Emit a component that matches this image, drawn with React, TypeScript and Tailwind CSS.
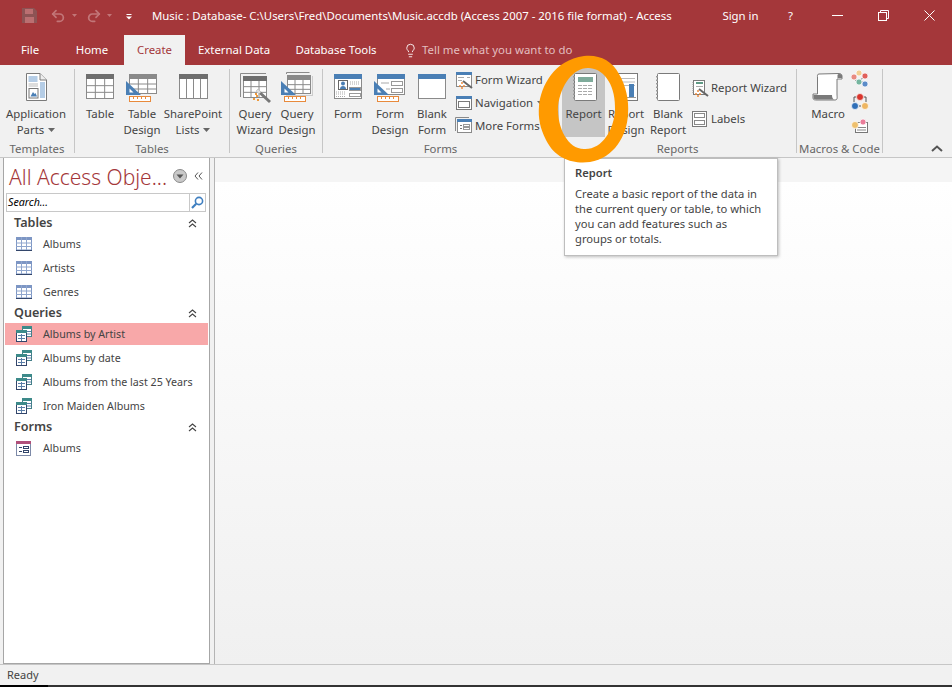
import React from 'react';
import { Lightbulb, Redo2, Undo2 } from 'lucide-react';

const BLUE = '#4a7fb5';
const GREY = '#8a8a8a';

function Big({ children }: { children: React.ReactNode }) {
  return (
    <svg width="32" height="32" viewBox="0 0 32 32" className="shrink-0">
      {children}
    </svg>
  );
}

function Small({ children }: { children: React.ReactNode }) {
  return (
    <svg width="18" height="18" viewBox="0 0 18 18" className="shrink-0">
      {children}
    </svg>
  );
}

// the blue set square and orange ruler shared by the design icons
function DesignTools() {
  return (
    <>
      <path d="M0 9 L15 23 L0 23 Z" fill={BLUE} />
      <path d="M3.5 16.5 L7.5 20.5 L3.5 20.5 Z" fill="#fff" />
      <rect x="3.5" y="24.5" width="21" height="5" fill="#fff" stroke="#e88a3c" />
      <path d="M7.5 25 v2 M11.5 25 v2 M15.5 25 v2 M19.5 25 v2" stroke="#e88a3c" />
    </>
  );
}

function TableGrid({ x, y, w, h, bar = '#6e6e6e' }: { x: number; y: number; w: number; h: number; bar?: string }) {
  const r1 = y + 5 + (h - 5) / 3;
  const r2 = y + 5 + ((h - 5) * 2) / 3;
  const c1 = x + w / 3;
  const c2 = x + (w * 2) / 3;
  return (
    <>
      <rect x={x + 0.5} y={y + 0.5} width={w - 1} height={h - 1} fill="#fff" stroke={GREY} />
      <path d={`M${x} ${r1} H${x + w} M${x} ${r2} H${x + w} M${c1} ${y} V${y + h} M${c2} ${y} V${y + h}`} stroke={GREY} />
      <rect x={x} y={y} width={w} height={5} fill={bar} />
    </>
  );
}

const AppPartsIcon = () => (
  <Big>
    <path d="M6.5 1.5 H20 L26.5 8 V28.5 H6.5 Z" fill="#fff" stroke="#7a7a7a" />
    <path d="M20 1.5 V8 H26.5" fill="#eee" stroke="#7a7a7a" />
    <rect x="8.5" y="4" width="9" height="6" fill="#b5cde6" />
    <rect x="20" y="10" width="5" height="16" fill="#b5cde6" />
    <path d="M8.5 12 H18 M8.5 14 H18" stroke="#bbb" />
    <rect x="9" y="16.5" width="9" height="9.5" fill="#fff" stroke="#777" />
    <path d="M10.5 24.5 L13 20 L14.5 22 L15.5 21 L17 24.5 Z" fill={BLUE} />
  </Big>
);
const TableIcon = () => (
  <Big>
    <TableGrid x={2} y={2} w={28} h={25} />
  </Big>
);
const TableDesignIcon = () => (
  <Big>
    <TableGrid x={3} y={2} w={28} h={20} bar="#8a8a8a" />
    <DesignTools />
  </Big>
);
const SharePointIcon = () => (
  <Big>
    <rect x="2.5" y="2.5" width="28" height="24" fill="#fff" stroke={GREY} />
    <path d="M9.5 2 V27 M16.5 2 V27 M23.5 2 V27" stroke={GREY} />
    <rect x="2" y="2" width="29" height="5" fill="#6e6e6e" />
  </Big>
);
const QueryWizardIcon = () => (
  <Big>
    <path d="M1.5 25 V1.5 H27" fill="none" stroke={GREY} />
    <TableGrid x={4} y={4} w={24} h={22} />
    <path d="M18 18 L31 30" stroke="#777" strokeWidth="3" />
    <path d="M18 18 L21 21" stroke="#ddd" strokeWidth="3" />
    <path d="M14 27 h2 M17 24 h2 M16 22 h2 M18 28 h2" stroke="#ee9a3c" strokeWidth="2" />
  </Big>
);
const QueryDesignIcon = () => (
  <Big>
    <path d="M5.5 2 V0.5 H28.5" fill="none" stroke={GREY} />
    <path d="M31.5 24 V4 M5 23.5 H31" fill="none" stroke="#ccc" />
    <TableGrid x={6} y={3} w={24} h={19} bar="#8a8a8a" />
    <DesignTools />
  </Big>
);
const FormIcon = () => (
  <Big>
    <rect x="2.5" y="2.5" width="27" height="24" fill="#fff" stroke={GREY} />
    <rect x="2" y="2" width="28" height="5" fill={BLUE} />
    <rect x="6.5" y="8.5" width="9" height="9" fill="#fff" stroke="#666" />
    <circle cx="11" cy="11.5" r="2" fill={BLUE} />
    <path d="M8 17 C8 13 14 13 14 17 Z" fill={BLUE} />
    <path d="M18 10 H28 M18 12 H28 M4 20 H14 M4 22 H14 M4 24.5 H14" stroke="#aaa" strokeDasharray="1 1" />
    <rect x="17.5" y="15.5" width="11" height="3" fill={BLUE} stroke="#999" />
    <rect x="17.5" y="21.5" width="11" height="3" fill="#fff" stroke="#999" />
  </Big>
);
const FormDesignIcon = () => (
  <Big>
    <rect x="3.5" y="2.5" width="27" height="20" fill="#fff" stroke={GREY} />
    <rect x="3" y="2" width="28" height="5" fill={BLUE} />
    <path d="M7 11 H15 M12 17 H16" stroke="#aaa" />
    <rect x="17.5" y="9.5" width="11" height="4" fill="#fff" stroke="#999" />
    <rect x="17.5" y="16.5" width="11" height="4" fill="#fff" stroke="#999" />
    <DesignTools />
  </Big>
);
const BlankFormIcon = () => (
  <Big>
    <rect x="2.5" y="2.5" width="27" height="24" fill="#fff" stroke={GREY} />
    <rect x="2" y="2" width="28" height="5" fill={BLUE} />
  </Big>
);

function Spiral({ x }: { x: number }) {
  return <path d={`M${x} 4 V27`} stroke="#999" strokeWidth="2" strokeDasharray="1.5 2" />;
}

const ReportIcon = () => (
  <Big>
    <rect x="6.5" y="1.5" width="22" height="27" rx="1" fill="#fff" stroke="#7a7a7a" />
    <Spiral x={6} />
    <rect x="10" y="5" width="15" height="5" fill="#7fab9b" />
    <path d="M10 13.5 H25 M10 16.5 H25 M10 19.5 H25 M10 22.5 H25" stroke="#aaa" strokeDasharray="4 1" />
  </Big>
);
const ReportDesignIcon = () => (
  <Big>
    <rect x="5.5" y="1.5" width="22" height="27" fill="#fff" stroke="#7a7a7a" />
    <path d="M11 6.5 H25 M11 10 H25 M11 13.5 H25" stroke="#bbb" />
    <path d="M0 1 L4 3 L7 0 L8 4 L11 5 L8 8 L6 11 L4 8 L0 7 L3 4 Z" fill="#f3c884" />
    <rect x="9" y="15" width="5" height="10" fill="#f3c884" />
    <rect x="19" y="12" width="5" height="13" fill={BLUE} />
    <path d="M8 25.5 H26" stroke="#999" />
  </Big>
);
const BlankReportIcon = () => (
  <Big>
    <rect x="5.5" y="1.5" width="22" height="27" rx="1" fill="#fff" stroke="#7a7a7a" />
    <Spiral x={5} />
  </Big>
);
const MacroIcon = () => (
  <Big>
    <path d="M7 2 C5 2 5.5 4 5.5 6 V22 H1 V26 C1 28 3 28 5 28 H23 C26 28 25 25 25 22 V7 H30 V4 C30 2 28 1.5 27 1.5 Z" fill="#fff" stroke="#7a7a7a" />
    <path d="M1.5 23 H20 C20 25 20.5 27 22 27.5 H4 C2 27.5 1.5 26 1.5 25 Z" fill="#7a7a7a" />
    <path d="M25.5 6 H30 V3 C29 1.5 25.5 1.5 25.5 3 Z" fill="#7a7a7a" />
  </Big>
);

const WizardMark = () => (
  <>
    <path d="M8 10 L17 17" stroke="#666" strokeWidth="2" />
    <path d="M4 15 h2 M6 12 h2 M8 15 h2 M6 17 h2" stroke="#ee8a3c" strokeWidth="1.6" />
  </>
);
const FormWizardIcon = () => (
  <Small>
    <rect x="1.5" y="1.5" width="15" height="14" fill="#fff" stroke={GREY} />
    <rect x="1" y="1" width="16" height="3" fill={BLUE} />
    <path d="M3 6.5 H9 M12 6.5 H15 M3 9.5 H7" stroke="#aaa" />
    <WizardMark />
  </Small>
);
const NavigationIcon = () => (
  <Small>
    <rect x="1.5" y="2.5" width="15" height="13" fill="#fff" stroke="#7a7a7a" />
    <rect x="1" y="2" width="16" height="3" fill={BLUE} />
    <rect x="3.5" y="7.5" width="11" height="6" fill="#fff" stroke="#7a7a7a" />
  </Small>
);
const MoreFormsIcon = () => (
  <Small>
    <path d="M0.5 14 V0.5 H14" fill="none" stroke={GREY} />
    <rect x="2.5" y="2.5" width="14" height="13" fill="#fff" stroke={GREY} />
    <rect x="2" y="2" width="15" height="3" fill={BLUE} />
    <path d="M5 8.5 H7 M5 11.5 H7" stroke="#777" />
    <rect x="8.5" y="7.5" width="6" height="2" fill="#fff" stroke="#999" />
    <rect x="8.5" y="10.5" width="6" height="2" fill="#fff" stroke="#999" />
  </Small>
);
const ReportWizardIcon = () => (
  <Small>
    <rect x="2.5" y="1.5" width="11" height="14" fill="#fff" stroke="#7a7a7a" />
    <path d="M2 3 V15" stroke="#999" strokeDasharray="1 1" />
    <rect x="5" y="3" width="7" height="2" fill="#5f9a85" />
    <path d="M5 7.5 H12" stroke="#aaa" />
    <WizardMark />
  </Small>
);
const LabelsIcon = () => (
  <Small>
    <rect x="1.5" y="1.5" width="14" height="15" fill="#fff" stroke="#7a7a7a" />
    <rect x="3.5" y="3.5" width="10" height="4" fill="#fff" stroke="#8a8a8a" />
    <rect x="3.5" y="10.5" width="10" height="4" fill="#fff" stroke="#8a8a8a" />
  </Small>
);
const Bead = ({ x, y, c, r = 2.5 }: { x: number; y: number; c: string; r?: number }) => (
  <circle cx={x} cy={y} r={r} fill={c} stroke="#fff" strokeWidth="0.7" />
);
const RunIcon = () => (
  <Small>
    <path d="M3 7 L9 3 M9 3 L14 6 M4 10 L15 13 M8 11 L14 6" stroke="#888" />
    <Bead x={8} y={3} c="#f2cf93" r={3} />
    <Bead x={3} y={7} c="#e88a80" r={3} />
    <Bead x={14} y={6} c="#e0605a" r={3} />
    <Bead x={8} y={12} c="#75b59f" r={3} />
    <Bead x={14} y={14} c="#5b8cc8" r={3} />
  </Small>
);
const ModuleIcon = () => (
  <Small>
    <path d="M3 9 V4 H6 M15 9 V4 H12" fill="none" stroke="#555" />
    <path d="M8 13 h2" stroke="#555" />
    <Bead x={9} y={4} c="#d9352c" r={3.5} />
    <Bead x={4} y={13} c="#2f6fb8" r={3.5} />
    <Bead x={14} y={13} c="#eeb662" r={3.5} />
  </Small>
);
const ClassIcon = () => (
  <Small>
    <rect x="4.5" y="6.5" width="12" height="10" fill="#fff" stroke="#777" />
    <path d="M6 11.5 H15 M6 14 H15" stroke="#888" />
    <Bead x={4} y={9} c="#eec06e" r={3.5} />
    <Bead x={12} y={6} c="#ea7d9a" r={3} />
  </Small>
);

const Caret = ({ className = '' }: { className?: string }) => (
  <svg width="7" height="4" viewBox="0 0 7 4" className={`inline-block ${className}`}>
    <path d="M0 0 H7 L3.5 4 Z" fill="#666" />
  </svg>
);

function RibbonButton({ w, icon, lines, caret, active }: { w: string; icon: React.ReactNode; lines: string[]; caret?: boolean; active?: boolean }) {
  return (
    <div className={`${w} h-[69px] flex flex-col items-center pt-1 ${active ? 'bg-[#c5c5c5]' : ''}`}>
      {icon}
      <div className="mt-0.5 text-center leading-4 whitespace-nowrap">
        {lines.map((line, i) => (
          <div key={line}>
            {line}
            {caret && i === lines.length - 1 && <Caret className="ml-1 mb-0.5" />}
          </div>
        ))}
      </div>
    </div>
  );
}

function SmallButton({ icon, label, caret, h }: { icon: React.ReactNode; label: string; caret?: boolean; h: string }) {
  return (
    <div className={`${h} flex items-center gap-[2px] whitespace-nowrap`}>
      {icon}
      <span>{label}</span>
      {caret && <Caret className="ml-[2px]" />}
    </div>
  );
}

function Group({ w, label, pl, children }: { w: string; label: string; pl: string; children: React.ReactNode }) {
  return (
    <>
      <div className={`${w} flex flex-col pt-[3px]`}>
        <div className={`h-[69px] flex ${pl}`}>{children}</div>
        <div className="mt-1 h-4 leading-4 text-center text-[#666] whitespace-nowrap">{label}</div>
      </div>
      <div className="w-px mt-1 h-[84px] bg-[#c6c6c6]" />
    </>
  );
}

const TabLabel = ({ w, label }: { w: string; label: string }) => (
  <div className={`${w} h-full flex items-center justify-center text-white`}>{label}</div>
);

const TitleSlot = ({ w, children }: { w: string; children: React.ReactNode }) => (
  <div className={`${w} flex items-center justify-center`}>{children}</div>
);

function TitleBar() {
  return (
    <div className="h-[35px] flex items-center pb-1 text-white">
      <svg width="15" height="15" viewBox="0 0 15 15" className="ml-[22px]">
        <path d="M0 0 H12 L15 3 V15 H0 Z" fill="#8d5354" />
        <rect x="3" y="1" width="8" height="5" fill="#bb6f71" />
        <rect x="3" y="9" width="9" height="6" fill="#bb6f71" />
      </svg>
      <Undo2 size={16} strokeWidth={2.6} className="ml-[13px] text-[#c27678]" />
      <svg width="5" height="3" className="ml-[6px]"><path d="M0 0 H5 L2.5 3 Z" fill="#c27678" /></svg>
      <Redo2 size={16} strokeWidth={2.6} className="ml-[9px] text-[#c27678]" />
      <svg width="5" height="3" className="ml-[5px]"><path d="M0 0 H5 L2.5 3 Z" fill="#c27678" /></svg>
      <svg width="6" height="6" viewBox="0 0 6 6" className="ml-[14px] mt-[2px]">
        <path d="M0.5 0.5 H5.5" stroke="#fff" />
        <path d="M0 2.5 H6 L3 5.5 Z" fill="#fff" />
      </svg>
      <div className="ml-[20px] whitespace-nowrap">
        Music : Database- C:\Users\Fred\Documents\Music.accdb (Access 2007 - 2016 file format) - Access
      </div>
      <div className="ml-auto flex items-center">
        <TitleSlot w="w-[53px]">Sign in</TitleSlot>
        <TitleSlot w="w-[47px]">?</TitleSlot>
        <TitleSlot w="w-[46px]">
          <svg width="11" height="1"><rect width="11" height="1" fill="#fff" /></svg>
        </TitleSlot>
        <TitleSlot w="w-[46px]">
          <svg width="11" height="11" viewBox="0 0 11 11" fill="none" stroke="#fff">
            <rect x="0.5" y="2.5" width="8" height="8" />
            <path d="M2.5 2 V0.5 H10.5 V8.5 H9" />
          </svg>
        </TitleSlot>
        <TitleSlot w="w-[46px]">
          <svg width="11" height="11" viewBox="0 0 11 11" stroke="#fff"><path d="M0.5 0.5 L10.5 10.5 M10.5 0.5 L0.5 10.5" /></svg>
        </TitleSlot>
      </div>
    </div>
  );
}

function TabRow() {
  return (
    <div className="h-[30px] flex items-center">
      <TabLabel w="w-[60px]" label="File" />
      <TabLabel w="w-[64px]" label="Home" />
      <div className="w-[61px] h-full flex items-center justify-center bg-[#f1f1f1] text-[#a4373a]">Create</div>
      <TabLabel w="w-[98px]" label="External Data" />
      <TabLabel w="w-[106px]" label="Database Tools" />
      <Lightbulb size={15} strokeWidth={1.4} className="ml-[14px] text-white" />
      <div className="ml-1 text-[#e3bfc0]">Tell me what you want to do</div>
    </div>
  );
}

function Ribbon() {
  return (
    <div className="relative h-[93px] flex bg-[#f1f1f1] border-b border-[#c6c6c6] text-[#444]">
      <Group w="w-[74px]" label="Templates" pl="pl-0">
        <RibbonButton w="w-[72px]" icon={<AppPartsIcon />} lines={['Application', 'Parts']} caret />
      </Group>
      <Group w="w-[154px]" label="Tables" pl="pl-[5px]">
        <RibbonButton w="w-[40px]" icon={<TableIcon />} lines={['Table']} />
        <RibbonButton w="w-[44px]" icon={<TableDesignIcon />} lines={['Table', 'Design']} />
        <RibbonButton w="w-[58px]" icon={<SharePointIcon />} lines={['SharePoint', 'Lists']} caret />
      </Group>
      <Group w="w-[92px]" label="Queries" pl="pl-[4px]">
        <RibbonButton w="w-[42px]" icon={<QueryWizardIcon />} lines={['Query', 'Wizard']} />
        <RibbonButton w="w-[42px]" icon={<QueryDesignIcon />} lines={['Query', 'Design']} />
      </Group>
      <Group w="w-[235px]" label="Forms" pl="pl-[4px]">
        <RibbonButton w="w-[42px]" icon={<FormIcon />} lines={['Form']} />
        <RibbonButton w="w-[42px]" icon={<FormDesignIcon />} lines={['Form', 'Design']} />
        <RibbonButton w="w-[42px]" icon={<BlankFormIcon />} lines={['Blank', 'Form']} />
        <div className="ml-[2px] flex flex-col">
          <SmallButton h="h-[23px]" icon={<FormWizardIcon />} label="Form Wizard" />
          <SmallButton h="h-[23px]" icon={<NavigationIcon />} label="Navigation" caret />
          <SmallButton h="h-[23px]" icon={<MoreFormsIcon />} label="More Forms" />
        </div>
      </Group>
      <Group w="w-[237px]" label="Reports" pl="pl-[3px]">
        <RibbonButton w="w-[43px]" active icon={<ReportIcon />} lines={['Report']} />
        <RibbonButton w="w-[42px]" icon={<ReportDesignIcon />} lines={['Report', 'Design']} />
        <RibbonButton w="w-[42px]" icon={<BlankReportIcon />} lines={['Blank', 'Report']} />
        <div className="ml-[2px] flex flex-col pt-1">
          <SmallButton h="h-[31px]" icon={<ReportWizardIcon />} label="Report Wizard" />
          <SmallButton h="h-[31px]" icon={<LabelsIcon />} label="Labels" />
        </div>
      </Group>
      <Group w="w-[85px]" label="Macros & Code" pl="pl-[11px]">
        <RibbonButton w="w-[40px]" icon={<MacroIcon />} lines={['Macro']} />
        <div className="ml-[3px] flex flex-col gap-[5px] pt-[2px]">
          <RunIcon />
          <ModuleIcon />
          <ClassIcon />
        </div>
      </Group>
      <svg width="12" height="7" viewBox="0 0 12 7" className="absolute right-[9px] bottom-[5px]">
        <path d="M1 6 L6 1.5 L11 6" fill="none" stroke="#555" strokeWidth="2" />
      </svg>
    </div>
  );
}

const NavTableIcon = () => (
  <svg width="16" height="14" viewBox="0 0 16 14">
    <rect x="0.5" y="0.5" width="15" height="12.5" fill="#fff" stroke="#7d96c4" />
    <rect x="0" y="0" width="16" height="3" fill="#7d96c4" />
    <path d="M0 6 H16 M0 9.5 H16 M5.5 0 V13 M10.5 0 V13" stroke="#8fa6ce" />
    <path d="M0 13.5 H16" stroke="#33466b" />
  </svg>
);
const NavQueryIcon = () => (
  <svg width="16" height="16" viewBox="0 0 16 16">
    <rect x="6.5" y="0.5" width="9" height="10" fill="#fff" stroke="#45808a" />
    <rect x="6" y="0" width="10" height="3" fill="#3d8a8a" />
    <path d="M11 5.5 h4 M11 8 h4" stroke="#5a7ea8" />
    <rect x="0.5" y="4.5" width="10" height="11" fill="#fff" stroke="#33466b" />
    <rect x="0" y="4" width="11" height="3" fill="#3d8a8a" />
    <path d="M2 9.5 h7 M2 12.5 h7 M5.5 8 v7" stroke="#5a7ea8" />
  </svg>
);
const NavFormIcon = () => (
  <svg width="15" height="15" viewBox="0 0 15 15">
    <rect x="0.5" y="0.5" width="14" height="14" fill="#fff" stroke="#7d8aa8" />
    <rect x="0" y="0" width="15" height="3" fill="#b0507a" />
    <path d="M3 6.5 h3 M3 10.5 h3" stroke="#33466b" />
    <rect x="7.5" y="5.5" width="5" height="2" fill="#fff" stroke="#33466b" />
    <rect x="7.5" y="9.5" width="5" height="2" fill="#fff" stroke="#33466b" />
  </svg>
);

const DoubleUp = () => (
  <svg width="9" height="9" viewBox="0 0 9 9" fill="none" stroke="#444" strokeWidth="1.1">
    <path d="M1 4 L4.5 1 L8 4 M1 8 L4.5 5 L8 8" />
  </svg>
);

function NavHeader({ label }: { label: string }) {
  return (
    <div className="h-[18px] flex items-center justify-between pl-[10px] pr-3 text-[12.6px] font-semibold text-[#444]">
      <span>{label}</span>
      <DoubleUp />
    </div>
  );
}

function NavItem({ icon, label, selected }: { icon: React.ReactNode; label: string; selected?: boolean }) {
  return (
    <div className="h-6 py-px mx-px">
      <div className={`h-[22px] flex items-center text-[10.7px] text-[#444] ${selected ? 'bg-[#f8a8a9]' : ''}`}>
        <div className="w-[38px] pl-[11px] flex items-center">{icon}</div>
        <span className="whitespace-nowrap">{label}</span>
      </div>
    </div>
  );
}

function NavPane() {
  return (
    <div className="w-[207px] bg-white border-x border-b border-[#a6a6a6]">
      <div className="h-[35px] flex items-center pl-[5px]">
        <div className="w-[164px] mt-1 text-[21px] font-light text-[#a4373a] whitespace-nowrap">All Access Obje...</div>
        <svg width="14" height="14" viewBox="0 0 14 14">
          <circle cx="7" cy="7" r="6.5" fill="#c9c9c9" stroke="#8a8a8a" />
          <path d="M3.5 5.5 H10.5 L7 9.5 Z" fill="#555" />
        </svg>
        <svg width="9" height="8" viewBox="0 0 9 8" fill="none" stroke="#555" className="ml-[7px]">
          <path d="M4 0.5 L1 4 L4 7.5 M8 0.5 L5 4 L8 7.5" />
        </svg>
      </div>
      <div className="ml-[2px] mr-[3px] h-[19px] flex items-center border border-[#c8c8c8] pl-px">
        <span className="flex-1 text-[10.7px] italic text-black">Search...</span>
        <div className="w-4 h-full flex items-center justify-center border-l border-[#c8c8c8]">
          <svg width="13" height="13" viewBox="0 0 13 13" fill="none" stroke="#3f7fc0">
            <circle cx="8" cy="5" r="3.6" strokeWidth="1.6" />
            <path d="M5.2 7.8 L1 12" strokeWidth="2.2" />
          </svg>
        </div>
      </div>
      <div className="h-[2px]" />
      <NavHeader label="Tables" />
      <NavItem icon={<NavTableIcon />} label="Albums" />
      <NavItem icon={<NavTableIcon />} label="Artists" />
      <NavItem icon={<NavTableIcon />} label="Genres" />
      <NavHeader label="Queries" />
      <NavItem selected icon={<NavQueryIcon />} label="Albums by Artist" />
      <NavItem icon={<NavQueryIcon />} label="Albums by date" />
      <NavItem icon={<NavQueryIcon />} label="Albums from the last 25 Years" />
      <NavItem icon={<NavQueryIcon />} label="Iron Maiden Albums" />
      <NavHeader label="Forms" />
      <NavItem icon={<NavFormIcon />} label="Albums" />
    </div>
  );
}

export default function App() {
  return (
    <div className="relative w-full h-screen overflow-hidden flex flex-col bg-[#a4373a] text-[11.4px] font-['Noto_Sans',sans-serif]">
      <TitleBar />
      <TabRow />
      <Ribbon />
      <div className="h-[506px] flex pl-[3px] bg-[#f1f1f1]">
        <NavPane />
        <div className="ml-1 flex-1 flex flex-col border-l border-[#b4b4b4]">
          <div className="h-6 bg-[#f5f5f5]" />
          <div className="flex-1 bg-gradient-to-b from-white to-[#f0f0f0]" />
        </div>
      </div>
      <div className="h-[21px] flex items-center pl-[7px] bg-[#f1f1f1] border-t border-[#c6c6c6] text-[#444] text-[11px]">Ready</div>
      <div className="flex-1 flex">
        <div className="w-12 bg-black" />
        <div className="flex-1 bg-[#333]" />
      </div>

      {/* hand drawn highlight on top of the screenshot */}
      <div className="absolute left-[564px] top-[158px] w-[214px] h-[98px] pl-[10px] pt-[6px] bg-white border border-[#bebebe] shadow-[1px_1px_3px_rgba(0,0,0,0.25)] text-[#444] text-[11.2px] leading-[15px]">
        <div className="font-semibold">Report</div>
        <div className="mt-[6px]">
          Create a basic report of the data in<br />
          the current query or table, to which<br />
          you can add features such as<br />
          groups or totals.
        </div>
      </div>
      <svg width="100" height="115" viewBox="0 0 100 115" className="absolute left-[534px] top-[52px]">
        <path
          fillRule="evenodd"
          fill="#ff9a00"
          d="M50 4 C64 2 78 8 85 22 C92 34 95 48 94 62 C93 84 80 106 56 110 C40 112 22 108 12 88 C6 76 4 66 5 54 C7 34 20 8 50 4 Z M55 16 C40 15 27 32 24 54 C23 76 34 97 50 97 C68 98 80 78 81 58 C82 36 72 17 55 16 Z"
        />
      </svg>
    </div>
  );
}
